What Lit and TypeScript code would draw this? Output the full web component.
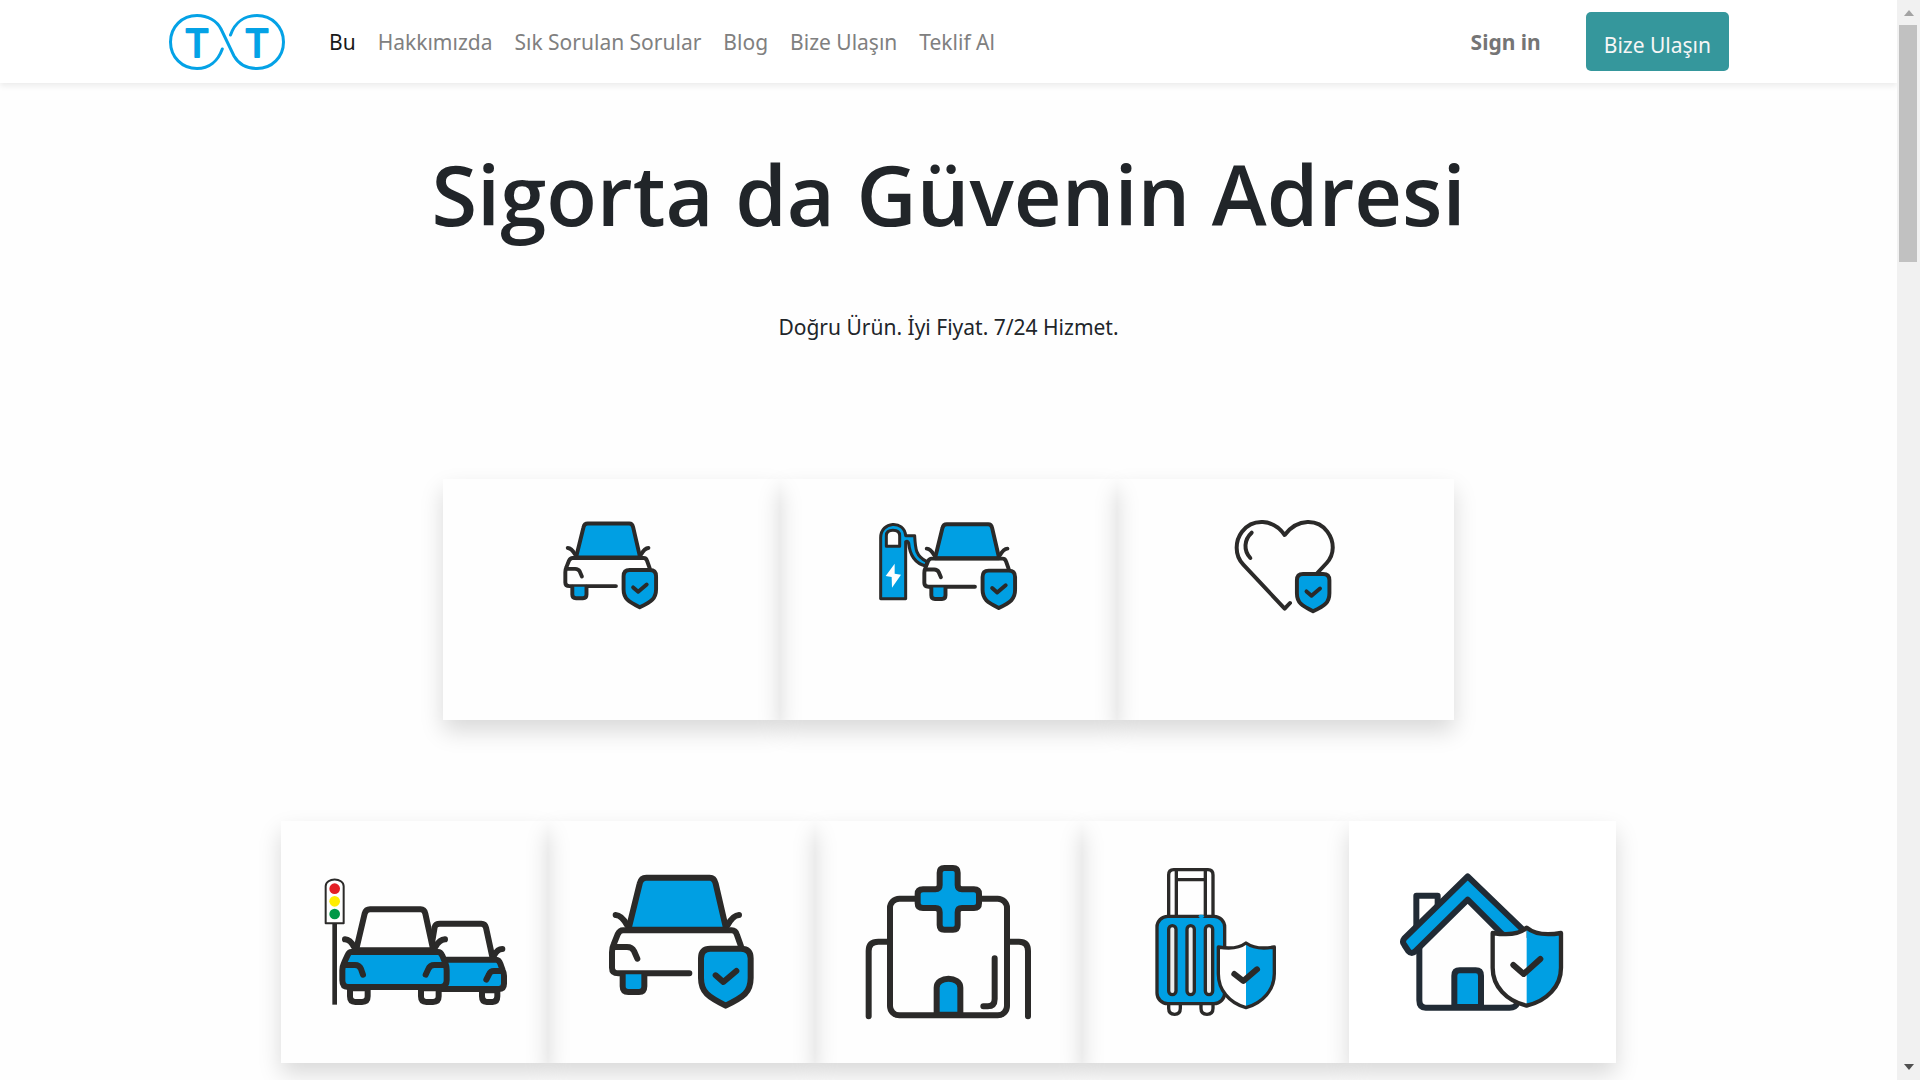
import { LitElement, html, svg, css } from "lit";
import { customElement } from "lit/decorators.js";

const shieldCheck = svg`
  <path class="ink blue" d="M512 417H604Q633 417 633 446V505C633 548 612 562 558 588C506 562 484 548 484 505V446Q484 417 512 417Z" />
  <path class="ink" d="M528 497L551 517L590 484" />
`;

/* Car seen from the front with an insurance shield, shared by three cards. */
const insuredCar = svg`
  <path class="ink blue" d="M266 360L300 222Q304 204 320 204H510Q524 204 528 222L560 360Z" />
  <path class="ink" d="M228 316Q246 317 262 346M598 316Q580 317 564 346" />
  <path class="ink" d="M604 410L592 376Q588 362 576 362H250Q240 362 234 374L222 404Q217 414 217 428V474Q217 491 236 491H449" />
  <path class="ink" d="M224 412H262Q277 412 283 424L293 447" />
  <path class="ink blue" d="M249 494V530Q249 547 266 547H298Q314 547 314 530V494" />
  ${shieldCheck}
`;

const carIcon = svg`<g transform="translate(264 26) scale(.6544)">${insuredCar}</g>`;

const chargerIcon = svg`
  <path class="mid blue" d="M63 295V112C63 62 134 58 138 106H165C167 145 168 168 202 184L198 197C158 187 149 150 147 128Q144 120 138 124V295Z" />
  <path class="mid white" d="M80 138V106Q80 90 100 90Q120 90 120 106V138Z" />
  <path class="plain-white" d="M105 190L78 227L96 230L97 262L124 223L105 220Z" />
  <g transform="translate(52 -62) scale(.6544)">${insuredCar}</g>
`;

const heartIcon = svg`
  <path class="heart" d="M542 398L526 415L402 283C374 254 378 210 398 184C430 144 490 144 526 194C566 142 626 146 654 184C676 214 676 252 652 278L624 308" />
  <path class="heart" d="M427 187C404 208 402 240 423 263" />
  <g transform="translate(246 38) scale(.6544)">${shieldCheck}</g>
`;

const trafficIcon = svg`
  <path class="pole" d="M194 342V585" />
  <path class="lamp" d="M167 341V230C167 203 221 203 221 230V341Z" />
  <circle cx="194" cy="237" r="16" fill="#e31e24" />
  <circle cx="194" cy="275" r="16" fill="#ffed00" />
  <circle cx="194" cy="313" r="16" fill="#009846" />
  <path class="ink" d="M486 400L494 352Q497 342 510 342H634Q645 342 648 354L668 446" />
  <path class="ink" d="M697 418Q682 418 672 438" />
  <path class="ink blue" d="M500 450H678Q687 450 691 462L698 482Q702 490 702 498V522Q702 538 686 538H500Z" />
  <path class="ink" d="M696 484H672Q661 484 657 494L649 510" />
  <path class="ink white" d="M636 542V560Q636 577 650 577H668Q682 577 682 560V542Z" />
  <path class="ink white" d="M258 422L284 312Q288 299 300 299H452Q463 299 466 312L490 422Z" />
  <path class="ink" d="M225 389Q241 390 252 412M525 389Q508 390 496 412" />
  <path class="ink blue" d="M244 427H504Q512 427 517 438L526 460Q530 470 530 482V512Q530 532 512 532H234Q217 532 217 512V482Q217 470 222 460L232 438Q237 427 244 427Z" />
  <path class="ink" d="M224 466H255Q268 466 273 478L279 495M524 466H493Q480 466 475 478L467 495" />
  <path class="ink white" d="M240 536V560Q240 577 256 577H276Q293 577 293 560V536ZM453 536V560Q453 577 469 577H489Q506 577 506 560V536Z" />
`;

const hospitalIcon = svg`
  <path class="ink" d="M177 620V424Q177 396 206 396H240M655 620V424Q655 396 628 396H594" />
  <rect class="ink" x="241" y="267" width="351" height="350" rx="28" />
  <path class="ink" d="M555 446V568Q555 590 534 590H521" />
  <path class="ink blue" d="M381 615V534C381 498 452 498 452 534V615Z" />
  <path class="ink blue" d="M404 175H430Q444 175 444 189V226Q444 239 457 239H493Q508 239 508 253V281Q508 295 493 295H457Q444 295 444 308V346Q444 360 430 360H404Q390 360 390 346V308Q390 295 377 295H340Q324 295 324 281V253Q324 239 340 239H377Q390 239 390 226V189Q390 175 404 175Z" />
`;

const travelIcon = svg`
  <path class="thin white" d="M267 320V196Q267 180 282 180H385Q400 180 400 196V320M290 182V320M377 182V320M290 210H377" />
  <path class="thin white" d="M267 584V596Q267 614 285 614Q302 614 302 596V584M364 584V596Q364 614 382 614Q400 614 400 596V584" />
  <rect class="thin blue" x="232" y="320" width="203" height="262" rx="32" />
  <path d="M362 320H368" stroke="#009fe3" stroke-width="10" />
  <rect class="thin pale" x="267" y="348" width="22" height="207" rx="11" />
  <rect class="thin pale" x="322" y="348" width="22" height="207" rx="11" />
  <rect class="thin pale" x="377" y="348" width="22" height="207" rx="11" />
  <path class="plain-white" d="M416 412Q466 420 499 400V593C440 574 416 530 416 492Z" />
  <path class="plain-blue" d="M499 400Q530 420 584 412V492C584 540 550 580 499 593Z" />
  <path class="thin" d="M416 412Q470 422 499 400Q530 422 584 412V492C584 540 550 580 499 594C448 580 416 540 416 492Z" />
  <path class="ink" d="M464 493L491 514L532 479" />
`;

const homeIcon = svg`
  <path class="house" d="M214 350V258H278V290" />
  <path class="house white" d="M223 400V572Q223 594 242 594H494Q512 594 516 582V400L368 268Z" />
  <path class="house blue" d="M328 592V498Q328 482 344 482H392Q408 482 408 498V592Z" />
  <path class="house blue" d="M368 200L178 386Q170 396 178 406L190 424Q200 436 212 424L368 270L476 378H538V364Z" />
  <path class="plain-white" d="M443 371Q508 380 545 355V588C470 566 443 520 443 474Z" />
  <path class="plain-blue" d="M545 355Q582 380 648 371V474C648 532 604 574 545 588Z" />
  <path class="badge" d="M443 370Q516 382 545 354Q578 382 648 370V474C648 530 606 574 545 588C484 574 443 530 443 474Z" />
  <path class="ink" d="M505 466L536 493L586 448" />
`;

const mainProducts = [
  { box: "39 26 1012 724", art: carIcon },
  { box: "-239 -64 1012 724", art: chargerIcon },
  { box: "23 26 1012 724", art: heartIcon },
];

const otherProducts = [
  { box: "33 34 801 725", art: trafficIcon },
  { box: "25 34 801 725", art: insuredCar },
  { box: "16 34 801 725", art: hospitalIcon },
  { box: "7 34 801 725", art: travelIcon },
  { box: "12 34 801 725", art: homeIcon },
];

const links = ["Bu", "Hakkımızda", "Sık Sorulan Sorular", "Blog", "Bize Ulaşın", "Teklif Al"];

@customElement("app-root")
export class AppRoot extends LitElement {
  static styles = css`
    :host {
      display: flex;
      height: 100vh;
      background: #fefefe;
      color: #212529;
      font-family: "Noto Sans", "Open Sans", sans-serif;
      font-size: 21px;
      line-height: 32px;
    }
    * {
      box-sizing: border-box;
    }
    .page {
      flex: 1;
      min-width: 0;
      overflow: hidden;
    }
    .navbar {
      background: #fff;
      box-shadow: 0 3px 6px rgba(0, 0, 0, 0.075);
    }
    .bar {
      display: flex;
      align-items: center;
      width: 84%;
      max-width: 1561px;
      min-height: 83px;
      margin: 0 auto;
    }
    .logo {
      display: block;
      width: 118px;
      height: 60px;
    }
    .brand {
      margin-right: 32px;
    }
    .letter {
      font-family: Inter, "DejaVu Sans", sans-serif;
      font-size: 38px;
      text-anchor: middle;
      fill: #04a2e6;
      stroke: #04a2e6;
      stroke-width: 2px;
      stroke-linejoin: round;
    }
    .loop {
      fill: none;
      stroke: #04a2e6;
      stroke-width: 3px;
      stroke-linecap: round;
    }
    .menu {
      display: flex;
      flex: 1;
      margin: 0;
      padding: 0;
      list-style: none;
    }
    .link {
      display: block;
      padding: 0 11px;
      color: #808080;
      text-decoration: none;
      white-space: nowrap;
    }
    .link.active {
      color: #191919;
    }
    .sign {
      margin-right: 34px;
      color: #757575;
      font-weight: 700;
    }
    .cta {
      display: block;
      padding: 17px 18px 10px;
      border-radius: 5px;
      background: #35979c;
      color: #f6f6f6;
      text-decoration: none;
      white-space: nowrap;
    }
    .intro {
      padding: 61px 24px 0;
      text-align: center;
    }
    .title {
      margin: 0;
      font-family: "Open Sans", "Noto Sans", sans-serif;
      font-size: 83px;
      font-weight: 600;
      line-height: 100px;
    }
    .lead {
      margin: 67px 0 0;
    }
    .cards {
      display: flex;
      margin: 0 auto;
    }
    .cards.main {
      width: 54%;
      max-width: 1012px;
      margin-top: 136px;
    }
    .cards.other {
      width: 71%;
      max-width: 1335px;
      margin-top: 101px;
    }
    .card {
      flex: 1;
      min-width: 0;
      box-shadow: 0 11px 22px rgba(0, 0, 0, 0.15);
    }
    .cards.other .card:last-child {
      background: #fff;
    }
    .art {
      display: block;
      width: 100%;
    }
    .art * {
      stroke-linecap: round;
      stroke-linejoin: round;
    }
    .ink, .mid, .thin, .heart, .lamp, .badge, .house, .pole {
      fill: none;
      stroke: #2b2a29;
    }
    .ink { stroke-width: 18px; }
    .mid { stroke-width: 9px; }
    .thin { stroke-width: 10px; }
    .heart { stroke-width: 12px; }
    .lamp { stroke-width: 6px; }
    .badge { stroke-width: 13px; }
    .house { stroke-width: 18px; stroke: #212b35; }
    .art .pole { stroke-width: 14px; stroke-linecap: butt; }
    .blue, .plain-blue { fill: #009fe3; }
    .white, .plain-white { fill: #fefefe; }
    .pale { fill: #ebecec; }
    .scrollbar {
      display: flex;
      flex-direction: column;
      align-items: center;
      width: 23px;
      padding: 10px 0;
      background: #f1f1f1;
    }
    .up, .down {
      border: 5px solid transparent;
    }
    .up {
      border-top: 0;
      border-bottom: 6px solid #a3a3a3;
    }
    .down {
      border-bottom: 0;
      border-top: 6px solid #505050;
    }
    .track {
      flex: 1;
      align-self: stretch;
      padding: 9px 3px 9px 2px;
    }
    .thumb {
      height: 23%;
      background: #c1c1c1;
    }
  `;

  private cards(kind: string, items: typeof mainProducts) {
    return html`<section class="cards ${kind}">
      ${items.map(
        (item) => html`<div class="card">
          <svg class="art" viewBox=${item.box} aria-hidden="true">${item.art}</svg>
        </div>`
      )}
    </section>`;
  }

  render() {
    return html`
      <div class="page">
        <header class="navbar">
          <div class="bar">
            <a class="brand" href="#">
              <svg class="logo" viewBox="168 12 118 60">
                <path class="loop" d="M222.300 49C218 61 209 68.500 197 68.500C182 68.500 170.500 57 170.500 42C170.500 27 182 15.500 197 15.500C208 15.500 217 21 221 29L234 56C238 63 246 68.500 257 68.500C272 68.500 283.500 57 283.500 42C283.500 27 272 15.500 257 15.500C245 15.500 235 22 230.500 35" />
                <text class="letter" x="197" y="57">T</text>
                <text class="letter" x="257" y="57">T</text>
              </svg>
            </a>
            <ul class="menu">
              ${links.map(
                (text, i) => html`<li><a class="link ${i === 0 ? "active" : ""}" href="#">${text}</a></li>`
              )}
            </ul>
            <a class="link sign" href="#">Sign in</a>
            <a class="cta" href="#">Bize Ulaşın</a>
          </div>
        </header>
        <main>
          <div class="intro">
            <h1 class="title">Sigorta da Güvenin Adresi</h1>
            <p class="lead">Doğru Ürün. İyi Fiyat. 7/24 Hizmet.</p>
          </div>
          ${this.cards("main", mainProducts)} ${this.cards("other", otherProducts)}
        </main>
      </div>
      <div class="scrollbar" aria-hidden="true">
        <div class="up"></div>
        <div class="track"><div class="thumb"></div></div>
        <div class="down"></div>
      </div>
    `;
  }
}
